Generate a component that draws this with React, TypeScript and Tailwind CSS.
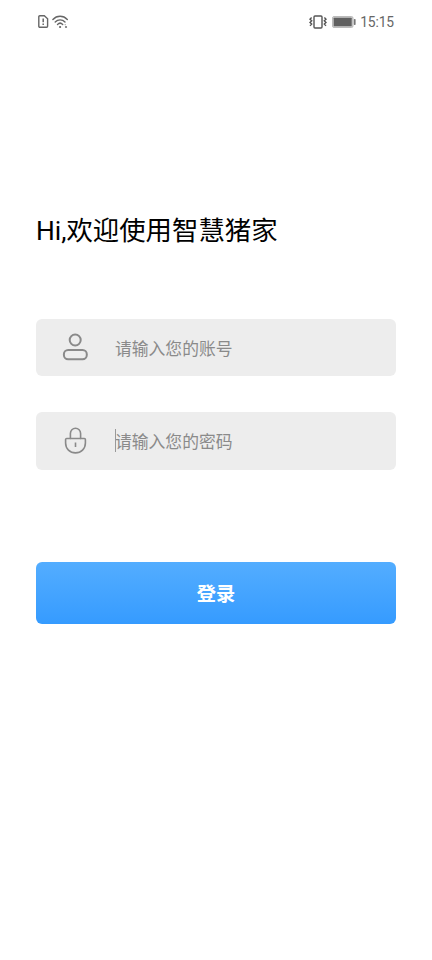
import type { ReactNode } from "react";

function SimAlertIcon() {
  return (
    <svg width="11" height="13" viewBox="0 0 11 13" fill="none" stroke="#666" strokeWidth="1.4">
      <path d="M1.800.8h4.500l3.300 3v7.400a1 1 0 0 1-1 1H1.800a1 1 0 0 1-1-1V1.800a1 1 0 0 1 1-1z" />
      <path d="M5.200 3.500v3.700M5.200 8.500v1.500" strokeWidth="1.500" />
    </svg>
  );
}

function WifiIcon() {
  return (
    <svg width="17" height="14" viewBox="0 0 17 14" fill="none" stroke="#666" strokeWidth="1.4" strokeLinecap="round">
      <path d="M.9 4.400c4-4.300 10.400-4.300 14.400 0" />
      <path d="M3.200 7c2.800-2.900 7-2.900 9.800 0" />
      <path d="M5.500 9.400c1.500-1.500 3.700-1.500 5.200 0" />
      <circle cx="8.100" cy="12" r="1.100" fill="#666" stroke="none" />
      <circle cx="14" cy="12" r="1.100" fill="#777" stroke="none" />
      <circle cx="13.200" cy="9.700" r=".6" fill="#999" stroke="none" />
    </svg>
  );
}

function VibrateIcon() {
  return (
    <svg width="18" height="14" viewBox="0 0 18 14" fill="none" stroke="#555" strokeWidth="1.4">
      <rect x="5" y="1" width="8" height="12" rx="1" />
      <path d="M2.600 2.600 1 4.200l1.700 1.600L1 7.400 2.700 9 1 10.800M15.400 2.600 17 4.200l-1.700 1.600L17 7.400 15.300 9l1.700 1.800" />
    </svg>
  );
}

function BatteryIcon() {
  return (
    <svg width="24" height="12" viewBox="0 0 24 12">
      <rect x=".5" y=".5" width="20.500" height="11" rx="1.500" fill="#ccc" stroke="#bbb" />
      <rect x="1.700" y="1.700" width="18" height="8.600" rx=".5" fill="#606060" />
      <rect x="21.800" y="3" width="1.800" height="6" rx=".7" fill="#777" />
    </svg>
  );
}

function UserIcon() {
  return (
    <svg width="28" height="30" viewBox="0 0 28 30" fill="none" stroke="#8a8a8a" strokeWidth="2">
      <circle cx="14.200" cy="8" r="5.500" />
      <rect x="2.900" y="18.100" width="22.900" height="9.200" rx="4.200" />
    </svg>
  );
}

function LockIcon() {
  return (
    <svg width="28" height="30" viewBox="0 0 28 30" fill="none" stroke="#8a8a8a" strokeWidth="1.600" strokeLinecap="round" strokeLinejoin="round">
      <path d="M9.400 12.500V7.400a5.100 5.100 0 0 1 10.200 0v5.100" />
      <path d="M5.800 12.500h17.500a1.100 1.100 0 0 1 1.100 1.100v3.400c0 5.800-4.300 9.900-9.900 9.900s-9.900-4.100-9.900-9.900v-3.400a1.100 1.100 0 0 1 1.200-1.100z" />
      <path d="M14.500 16.500v4.500" strokeLinecap="butt" />
    </svg>
  );
}

function Field({ icon, placeholder, type, caret }: { icon: ReactNode; placeholder: string; type: string; caret?: boolean }) {
  return (
    <label className="relative flex h-[57.500px] items-center rounded-[6px] bg-[#ededed] pl-[25px]">
      {icon}
      <input
        type={type}
        placeholder={placeholder}
        className="ml-[26px] h-8 min-w-0 flex-1 bg-transparent pt-[3px] text-[16.800px] outline-none placeholder:text-[#8a8a8a]"
      />
      {caret && <span className="absolute left-[79px] top-[17px] h-[23px] w-px bg-[#999]" />}
    </label>
  );
}

export default function App() {
  return (
    <div className="flex h-[960px] w-[432px] flex-col bg-white font-[Roboto,'Noto_Sans_CJK_SC',sans-serif]">
      <header className="flex h-[43px] items-center justify-between pl-[38px] pr-[38px]">
        <div className="flex items-center gap-[3px]">
          <SimAlertIcon />
          <WifiIcon />
        </div>
        <div className="flex items-center">
          <VibrateIcon />
          <span className="ml-[5px]">
            <BatteryIcon />
          </span>
          <span className="ml-[4px] text-[13.800px] leading-5 tracking-[-0.1px] text-[#666]">15:15</span>
        </div>
      </header>
      <main className="flex flex-col px-9 pt-[168px]">
        <h1 className="h-10 whitespace-nowrap text-[26.400px] leading-[41px] text-black">Hi,欢迎使用智慧猪家</h1>
        <form className="mt-[67.500px] flex flex-col">
          <Field icon={<UserIcon />} placeholder="请输入您的账号" type="text" />
          <div className="h-9" />
          <Field icon={<LockIcon />} placeholder="请输入您的密码" type="password" caret />
          <button
            type="button"
            className="mt-[92px] h-[62.500px] rounded-[6px] bg-linear-to-b from-[#53adff] to-[#359bff] pt-[5px] text-[19.200px] font-bold text-white"
          >
            登录
          </button>
        </form>
      </main>
    </div>
  );
}
